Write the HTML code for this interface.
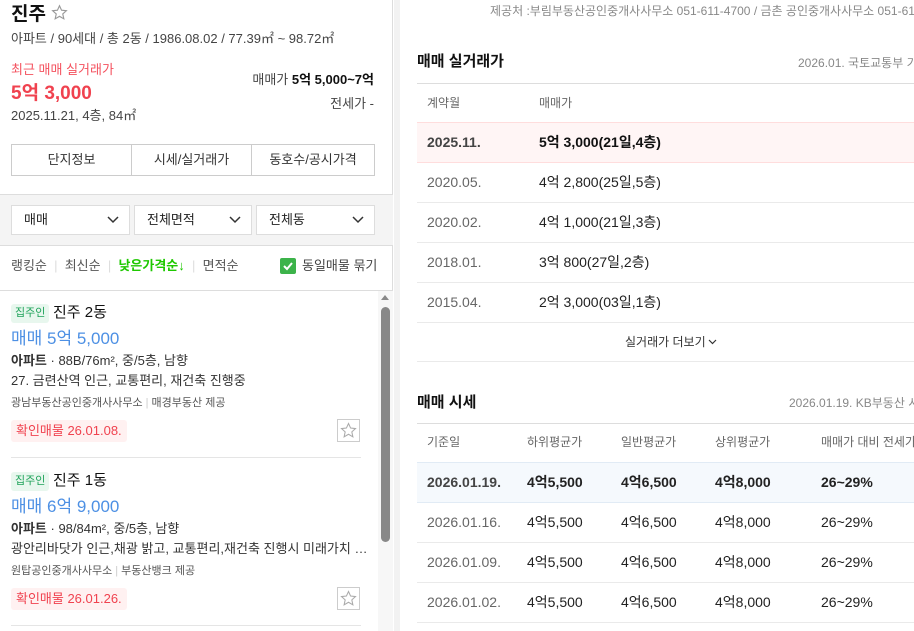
<!DOCTYPE html>
<html><head><meta charset="utf-8"><style>
*{margin:0;padding:0;box-sizing:border-box}
body{width:914px;height:631px;overflow:hidden;background:#fff;font-family:"Liberation Sans","Noto Sans CJK KR",sans-serif;color:#222;position:relative}
.a{position:absolute;white-space:nowrap;line-height:1.3}
#left{position:absolute;left:0;top:0;width:393px;height:631px;border-right:1px solid #ddd;background:#fff}
#gap{position:absolute;left:394px;top:0;width:6px;height:631px;background:#f2f2f2}
.btn{position:absolute;top:144px;height:32px;border:1px solid #ccc;font-size:13px;text-align:center;line-height:30px;color:#333;background:#fff}
.sel{position:absolute;top:205px;height:30px;border:1px solid #ddd;background:#fff;font-size:13px;line-height:28px;padding-left:12px;color:#222}
.sel svg{position:absolute;right:10px;top:10px}
.tag{position:absolute;background:#e8f7ee;color:#1fa35a;font-size:11px;border-radius:3px;padding:0 4px;height:19px;line-height:19px}
.conf{position:absolute;background:#fff1f1;color:#f0424f;font-size:13px;border-radius:3px;padding:0 5px;height:22px;line-height:22px}
.star{position:absolute;width:23px;height:23px;border:1px solid #ccc}
.line{position:absolute;left:417px;right:0;height:1px;background:#eaeaea}
.r{position:absolute;font-size:14px;white-space:nowrap;line-height:20px;height:20px}
</style></head><body>
<div id="left">
 <div class="a" style="left:11px;top:3px;font-size:19px;font-weight:bold;color:#111;line-height:24px">진주 <svg width="17" height="17" viewBox="0 0 24 24" style="vertical-align:-1px"><path d="M12 2.5l2.9 6.3 6.8.7-5.1 4.6 1.5 6.8L12 17.4l-6.1 3.5 1.5-6.8-5.1-4.6 6.8-.7z" fill="none" stroke="#999" stroke-width="1.6"/></svg></div>
 <div class="a" style="left:11px;top:31px;font-size:13px;color:#444">아파트 / 90세대 / 총 2동 / 1986.08.02 / 77.39㎡ ~ 98.72㎡</div>
 <div class="a" style="left:11px;top:62px;font-size:13px;color:#f4515e">최근 매매 실거래가</div>
 <div class="a" style="left:11px;top:82px;font-size:19px;font-weight:bold;color:#f0424f">5억 3,000</div>
 <div class="a" style="left:11px;top:108px;font-size:13px;color:#444">2025.11.21, 4층, 84㎡</div>
 <div class="a" style="right:18px;top:72px;font-size:13px;color:#444">매매가 <b style="color:#111">5억 5,000~7억</b></div>
 <div class="a" style="right:18px;top:96px;font-size:13px;color:#444">전세가 -</div>
 <div class="btn" style="left:11px;width:121px">단지정보</div>
 <div class="btn" style="left:131px;width:121px">시세/실거래가</div>
 <div class="btn" style="left:251px;width:124px">동호수/공시가격</div>
 <div style="position:absolute;left:0;top:194px;width:393px;height:52px;background:#f4f4f4;border-top:1px solid #ddd;border-bottom:1px solid #ddd"></div>
 <div class="sel" style="left:11px;width:119px">매매<svg width="12" height="8"><path d="M1 1l5 5 5-5" stroke="#333" stroke-width="1.5" fill="none"/></svg></div>
 <div class="sel" style="left:134px;width:118px">전체면적<svg width="12" height="8"><path d="M1 1l5 5 5-5" stroke="#333" stroke-width="1.5" fill="none"/></svg></div>
 <div class="sel" style="left:256px;width:119px">전체동<svg width="12" height="8"><path d="M1 1l5 5 5-5" stroke="#333" stroke-width="1.5" fill="none"/></svg></div>
 <div class="a" style="left:11px;top:258px;font-size:13px;color:#555">랭킹순 <span style="color:#ddd">&nbsp;|&nbsp;</span> 최신순 <span style="color:#ddd">&nbsp;|&nbsp;</span> <span style="color:#1ec800;font-weight:bold">낮은가격순</span><span style="color:#1ec800">↓</span> <span style="color:#ddd">&nbsp;|&nbsp;</span> 면적순</div>
 <div style="position:absolute;left:280px;top:258px;width:16px;height:16px;background:#3cb34a;border-radius:2px"><svg width="16" height="16"><path d="M4 8l3 3 5-6" stroke="#fff" stroke-width="2" fill="none"/></svg></div>
 <div class="a" style="left:302px;top:258px;font-size:13px;color:#444">동일매물 묶기</div>
 <div style="position:absolute;left:0;top:290px;width:393px;height:1px;background:#ddd"></div>
 <div style="position:absolute;left:378px;top:291px;width:15px;height:340px;background:#f7f7f7"></div>
 <svg class="a" style="left:380px;top:293px" width="10" height="8"><path d="M1 7l4-5 4 5z" fill="#888"/></svg>
 <div style="position:absolute;left:381px;top:307px;width:9px;height:235px;background:#888;border-radius:5px"></div>

 <div class="tag" style="left:11px;top:304px">집주인</div>
 <div class="a" style="left:53px;top:303px;font-size:15px;color:#111">진주 2동</div>
 <div class="a" style="left:11px;top:328px;font-size:17px;color:#4d90e4">매매 5억 5,000</div>
 <div class="a" style="left:11px;top:353px;font-size:13px;color:#333"><b>아파트</b> · 88B/76m², 중/5층, 남향</div>
 <div class="a" style="left:11px;top:373px;font-size:13px;color:#333">27. 금련산역 인근, 교통편리, 재건축 진행중</div>
 <div class="a" style="left:11px;top:396px;font-size:11px;color:#555">광남부동산공인중개사사무소 <span style="color:#ccc">|</span> 매경부동산 제공</div>
 <div class="conf" style="left:11px;top:420px">확인매물 26.01.08.</div>
 <div class="star" style="left:337px;top:419px"><svg width="21" height="21" viewBox="0 0 24 24"><path d="M12 4l2.4 5.2 5.6.6-4.2 3.8 1.2 5.6L12 16.3l-5 2.9 1.2-5.6L4 9.8l5.6-.6z" fill="none" stroke="#aaa" stroke-width="1.2"/></svg></div>
 <div style="position:absolute;left:11px;top:457px;width:350px;height:1px;background:#e5e5e5"></div>

 <div class="tag" style="left:11px;top:472px">집주인</div>
 <div class="a" style="left:53px;top:471px;font-size:15px;color:#111">진주 1동</div>
 <div class="a" style="left:11px;top:496px;font-size:17px;color:#4d90e4">매매 6억 9,000</div>
 <div class="a" style="left:11px;top:521px;font-size:13px;color:#333"><b>아파트</b> · 98/84m², 중/5층, 남향</div>
 <div class="a" style="left:11px;top:541px;font-size:13px;color:#333">광안리바닷가 인근,채광 밝고, 교통편리,재건축 진행시 미래가치 …</div>
 <div class="a" style="left:11px;top:564px;font-size:11px;color:#555">원탑공인중개사사무소 <span style="color:#ccc">|</span> 부동산뱅크 제공</div>
 <div class="conf" style="left:11px;top:588px">확인매물 26.01.26.</div>
 <div class="star" style="left:337px;top:587px"><svg width="21" height="21" viewBox="0 0 24 24"><path d="M12 4l2.4 5.2 5.6.6-4.2 3.8 1.2 5.6L12 16.3l-5 2.9 1.2-5.6L4 9.8l5.6-.6z" fill="none" stroke="#aaa" stroke-width="1.2"/></svg></div>
 <div style="position:absolute;left:11px;top:625px;width:350px;height:1px;background:#e5e5e5"></div>
</div>
<div id="gap"></div>

<div class="a" style="left:490px;top:4px;font-size:12px;color:#888">제공처 :부림부동산공인중개사사무소 051-611-4700 / 금촌 공인중개사사무소 051-611-2700</div>
<div class="a" style="left:417px;top:52px;font-size:15px;font-weight:bold;color:#111">매매 실거래가</div>
<div class="a" style="left:798px;top:56px;font-size:12px;color:#888">2026.01. 국토교통부 기준</div>
<div class="line" style="top:83px;background:#ddd"></div>
<div class="r" style="left:427px;top:93px;font-size:12px;color:#666">계약월</div>
<div class="r" style="left:539px;top:93px;font-size:12px;color:#666">매매가</div>
<div style="position:absolute;left:417px;right:0;top:122px;height:41px;background:#fff5f5;border-top:1px solid #fdd;border-bottom:1px solid #fdd"></div>
<div class="r" style="left:427px;top:132px;font-weight:bold;color:#444">2025.11.</div>
<div class="r" style="left:539px;top:132px;font-weight:bold;color:#111">5억 3,000(21일,4층)</div>
<div class="r" style="left:427px;top:172px;color:#666">2020.05.</div><div class="r" style="left:539px;top:172px">4억 2,800(25일,5층)</div>
<div class="line" style="top:202px"></div>
<div class="r" style="left:427px;top:212px;color:#666">2020.02.</div><div class="r" style="left:539px;top:212px">4억 1,000(21일,3층)</div>
<div class="line" style="top:242px"></div>
<div class="r" style="left:427px;top:252px;color:#666">2018.01.</div><div class="r" style="left:539px;top:252px">3억 800(27일,2층)</div>
<div class="line" style="top:282px"></div>
<div class="r" style="left:427px;top:292px;color:#666">2015.04.</div><div class="r" style="left:539px;top:292px">2억 3,000(03일,1층)</div>
<div class="line" style="top:322px"></div>
<div class="r" style="left:625px;top:332px;font-size:12px;color:#333">실거래가 더보기<svg width="9" height="6" style="margin-left:2px;vertical-align:1px"><path d="M1 1l3.5 3.5L8 1" stroke="#333" stroke-width="1.2" fill="none"/></svg></div>
<div class="line" style="top:361px"></div>

<div class="a" style="left:417px;top:393px;font-size:15px;font-weight:bold;color:#111">매매 시세</div>
<div class="a" style="left:789px;top:396px;font-size:12px;color:#888">2026.01.19. KB부동산 시세</div>
<div class="line" style="top:423px;background:#ddd"></div>
<div class="r" style="left:427px;top:432px;font-size:12px;color:#666">기준일</div>
<div class="r" style="left:527px;top:432px;font-size:12px;color:#666">하위평균가</div>
<div class="r" style="left:621px;top:432px;font-size:12px;color:#666">일반평균가</div>
<div class="r" style="left:715px;top:432px;font-size:12px;color:#666">상위평균가</div>
<div class="r" style="left:821px;top:432px;font-size:12px;color:#666">매매가 대비 전세가</div>
<div style="position:absolute;left:417px;right:0;top:462px;height:41px;background:#f5f9fd;border-top:1px solid #e1ebf5;border-bottom:1px solid #e1ebf5"></div>
<div class="r" style="left:427px;top:472px;font-weight:bold;color:#444">2026.01.19.</div>
<div class="r" style="left:527px;top:472px;font-weight:bold">4억5,500</div>
<div class="r" style="left:621px;top:472px;font-weight:bold">4억6,500</div>
<div class="r" style="left:715px;top:472px;font-weight:bold">4억8,000</div>
<div class="r" style="left:821px;top:472px;font-weight:bold">26~29%</div>
<div class="r" style="left:427px;top:512px;color:#666">2026.01.16.</div><div class="r" style="left:527px;top:512px">4억5,500</div><div class="r" style="left:621px;top:512px">4억6,500</div><div class="r" style="left:715px;top:512px">4억8,000</div><div class="r" style="left:821px;top:512px">26~29%</div>
<div class="line" style="top:542px"></div>
<div class="r" style="left:427px;top:552px;color:#666">2026.01.09.</div><div class="r" style="left:527px;top:552px">4억5,500</div><div class="r" style="left:621px;top:552px">4억6,500</div><div class="r" style="left:715px;top:552px">4억8,000</div><div class="r" style="left:821px;top:552px">26~29%</div>
<div class="line" style="top:582px"></div>
<div class="r" style="left:427px;top:592px;color:#666">2026.01.02.</div><div class="r" style="left:527px;top:592px">4억5,500</div><div class="r" style="left:621px;top:592px">4억6,500</div><div class="r" style="left:715px;top:592px">4억8,000</div><div class="r" style="left:821px;top:592px">26~29%</div>
<div class="line" style="top:622px"></div>
</body></html>
